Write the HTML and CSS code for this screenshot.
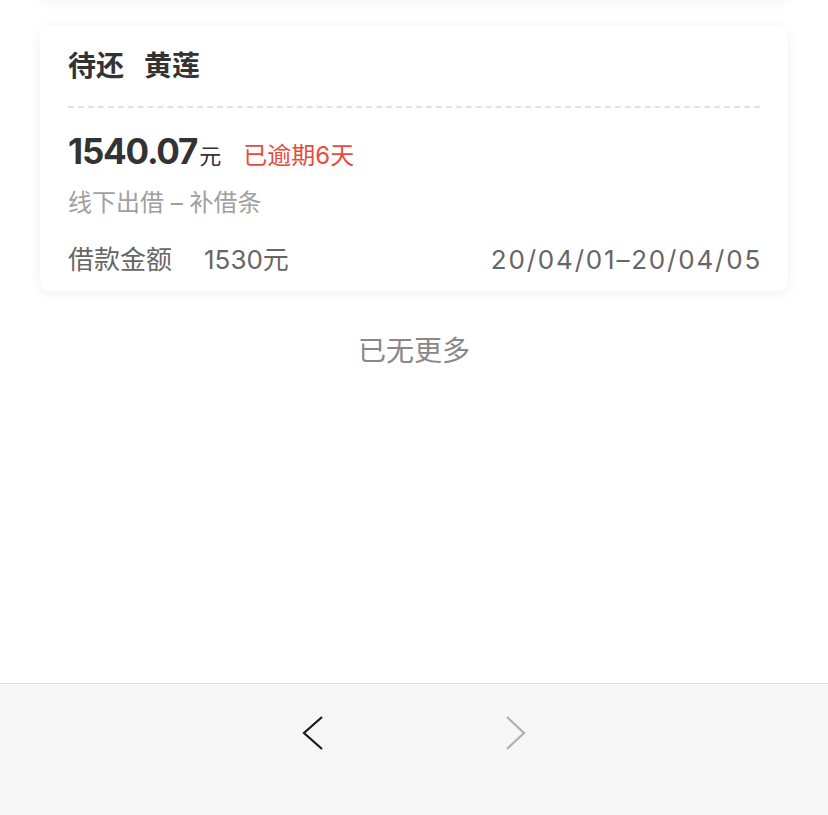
FILE: index.html
```html
<!DOCTYPE html>
<html lang="zh-CN">
<head>
    <meta charset="UTF-8">
    <meta name="viewport" content="width=device-width, initial-scale=1.0">
    <title>待还</title>
    <link rel="stylesheet" href="styles.css">
</head>
<body>

<div class="page">
    <div class="list">
        <div class="card card-prev"></div>

        <div class="card">
            <div class="card-title">待还<span class="name">黄莲</span></div>
            <div class="card-body">
                <div class="amount-row">
                    <span class="amount">1540.07</span><span class="unit">元</span>
                    <span class="overdue">已逾期6天</span>
                </div>
                <div class="type">线下出借 – 补借条</div>
                <div class="info-row">
                    <span>借款金额<span class="loan">1530元</span></span>
                    <span class="date">20/04/01–20/04/05</span>
                </div>
            </div>
        </div>

        <p class="no-more">已无更多</p>
    </div>

    <div class="toolbar">
        <svg class="nav-icon" width="24" height="36" viewBox="0 0 24 36">
            <path d="M21 2 L3 18 L21 34" fill="none" stroke="#1a1a1a" stroke-width="2.2"/>
        </svg>
        <svg class="nav-icon" width="24" height="36" viewBox="0 0 24 36">
            <path d="M4 2 L21 18 L4 34" fill="none" stroke="#b0b0b0" stroke-width="2.2"/>
        </svg>
    </div>
</div>

</body>
</html>
```

FILE: styles.css
```css
* {
    box-sizing: border-box;
}
body {
    margin: 0;
    font-family: "Inter", "Noto Sans CJK SC", sans-serif;
    background: #fff;
}
.page {
    height: 815px;
    display: flex;
    flex-direction: column;
    overflow: hidden;
}
.list {
    flex: 1;
    padding: 0 40px;
}
.card {
    background: #fff;
    border-radius: 10px;
    box-shadow: 0 2px 14px rgba(0,0,0,0.06);
}
.card-prev {
    height: 20px;
    margin-top: -20px;
    margin-bottom: 26px;
}
.card-title {
    margin: 0 28px;
    padding: 22px 0 22px;
    font-size: 28px;
    line-height: 36px;
    font-weight: 700;
    color: #333;
    border-bottom: 2px dashed #e2e2e2;
}
.card-title .name {
    margin-left: 20px;
}
.card-body {
    padding: 19px 28px 13px;
}
.amount-row {
    display: flex;
    align-items: baseline;
    color: #333;
}
.amount {
    font-size: 35px;
    font-weight: 700;
    letter-spacing: -1.2px;
    line-height: 48px;
}
.unit {
    font-size: 22px;
    margin-left: 2px;
}
.overdue {
    margin-left: 22px;
    font-size: 24px;
    color: #e84b3c;
}
.type {
    margin-top: 11px;
    font-size: 24px;
    line-height: 34px;
    color: #a0a0a0;
}
.info-row {
    margin-top: 22px;
    display: flex;
    justify-content: space-between;
    font-size: 26px;
    line-height: 36px;
    color: #666;
}
.loan {
    margin-left: 32px;
}
.date {
    letter-spacing: 1.8px;
    margin-right: -2px;
}
.no-more {
    margin: 40px 0 0;
    text-align: center;
    font-size: 28px;
    line-height: 40px;
    color: #888;
}
.toolbar {
    height: 132px;
    background: #f6f6f6;
    border-top: 1px solid #e0e0e0;
    display: flex;
    justify-content: center;
    gap: 178px;
    padding-top: 31px;
}
.nav-icon {
    display: block;
}
```
